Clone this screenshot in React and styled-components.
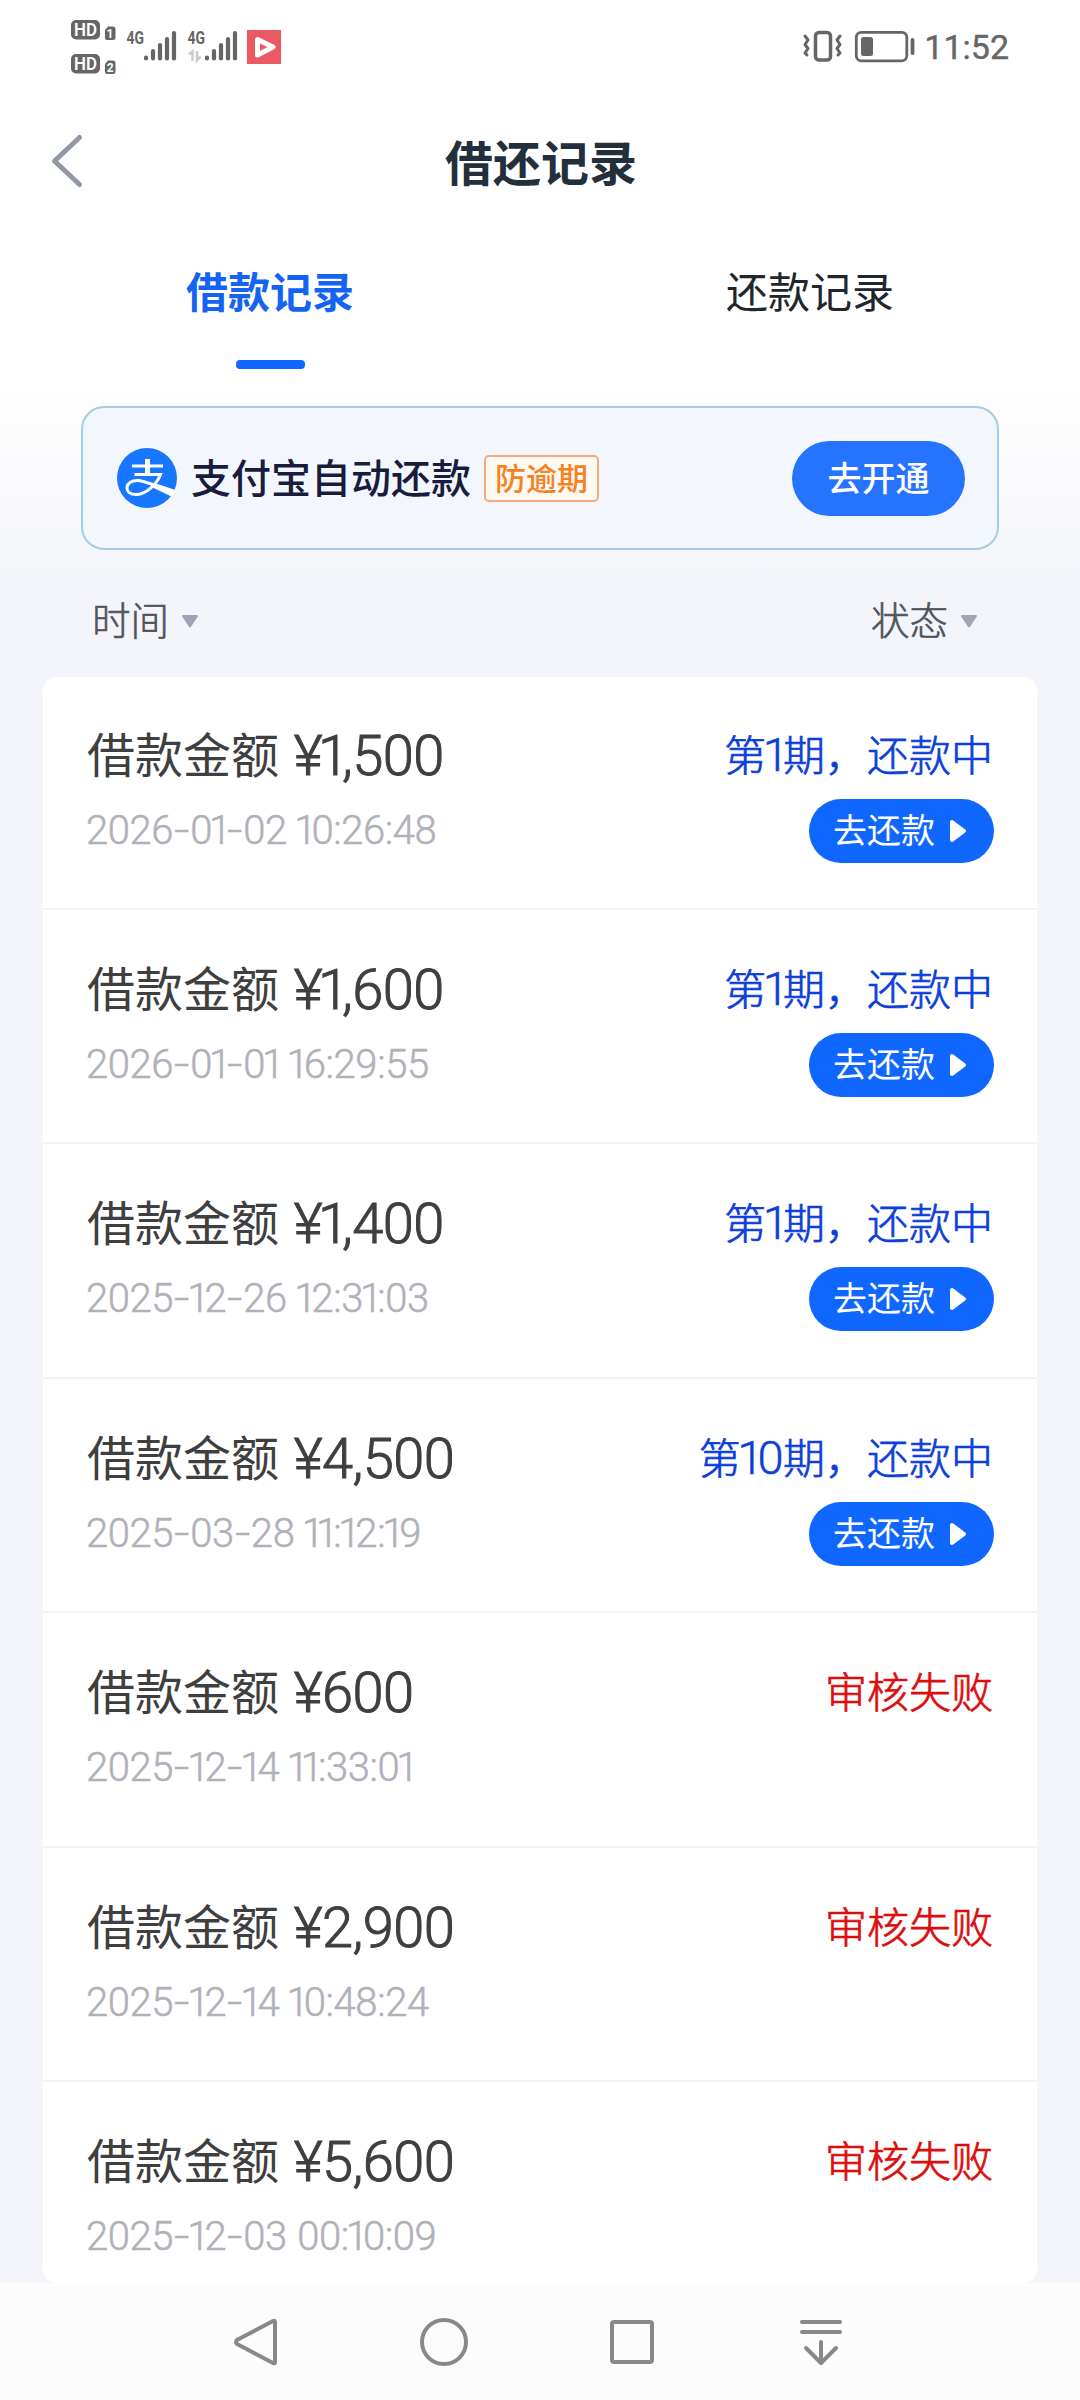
import React from 'react';
import styled, { createGlobalStyle, css } from 'styled-components';

const GlobalStyle = createGlobalStyle`
  * {
    box-sizing: border-box;
  }

  body {
    margin: 0;
    background: #f4f5fa;
    font-family: 'Noto Sans CJK SC', 'Noto Sans', sans-serif;
  }
`;

const Screen = styled.div`
  display: flex;
  flex-direction: column;
  width: 1080px;
  height: 2400px;
  overflow: hidden;
  background: linear-gradient(#ffffff 370px, #fcfcfd 430px, #f4f5fa 580px);
`;

const StatusBar = styled.div`
  display: flex;
  justify-content: space-between;
  height: 92px;
  padding: 0 71px;
`;

const StatusGroup = styled.div`
  display: flex;
  align-items: center;
`;

const Clock = styled.span`
  margin: 2px 0 0 8px;
  font: 400 34px/40px Roboto, sans-serif;
  color: #666;
  -webkit-text-stroke: 0.4px #666;
`;

const Header = styled.header`
  display: grid;
  grid-template-columns: 120px 1fr 120px;
  align-items: center;
  height: 138px;
`;

const BackButton = styled.button`
  display: flex;
  padding: 0 0 0 47px;
  border: 0;
  background: none;
`;

const Title = styled.h1`
  margin: 0;
  padding: 0 0 3px 2px;
  font-size: 48px;
  line-height: 70px;
  font-weight: 700;
  text-align: center;
  color: #232f3b;
`;

const Tabs = styled.nav`
  display: grid;
  grid-template-columns: 1fr 1fr;
  height: 176px;
`;

const Tab = styled.div`
  display: flex;
  flex-direction: column;
  align-items: center;
  padding-top: 29px;
  font-size: 42px;
  line-height: 62px;
  color: #20262c;

  ${(props) =>
    props.$active &&
    css`
      font-weight: 700;
      color: #1463f3;

      &::after {
        content: '';
        width: 69px;
        height: 9px;
        margin-top: 39px;
        border-radius: 4px;
        background: #1166ff;
      }
    `}
`;

const Banner = styled.section`
  display: flex;
  align-items: center;
  width: 918px;
  height: 144px;
  margin-left: 81px;
  padding: 0 32px 0 34px;
  border: 2px solid #a9cbe6;
  border-radius: 23px;
  background: #f3f7fd;
  box-shadow: inset 0 0 5px #e8f8ff;
`;

const BannerText = styled.span`
  margin-left: 14px;
  padding-bottom: 4px;
  font-size: 40px;
  font-weight: 500;
  line-height: 58px;
  color: #1a1c3d;
`;

const Tag = styled.span`
  width: 115px;
  height: 47px;
  margin-left: 13px;
  border: 2px solid #f4ab7a;
  border-radius: 5px;
  background: #fff9f4;
  font-size: 31px;
  font-weight: 500;
  line-height: 40px;
  text-align: center;
  color: #f7811c;
`;

const OpenButton = styled.button`
  width: 173px;
  height: 75px;
  margin-left: auto;
  padding: 0 0 3px;
  border: 0;
  border-radius: 38px;
  background: #2673ff;
  font: inherit;
  font-size: 34px;
  font-weight: 500;
  color: #fff;
`;

const Filters = styled.div`
  display: flex;
  justify-content: space-between;
  align-items: center;
  height: 127px;
  padding: 9px 102px 0 92px;
`;

const Filter = styled.div`
  display: flex;
  align-items: center;
  gap: 12px;
  font-size: 38.5px;
  font-weight: 300;
  line-height: 56px;
  color: #50545b;
  -webkit-text-stroke: 0.6px currentColor;

  svg {
    margin-top: 6px;
  }
`;

const List = styled.main`
  flex: 1;
  margin: 0 43px;
  overflow: hidden;
  border-radius: 14px;
  background: #fff;
`;

const Row = styled.article`
  display: flex;
  justify-content: space-between;
  height: 234.4px;
  padding: 43px 43px 0;
  border-bottom: 2px solid #f3f4f7;

  &:first-child {
    height: 233px;
    padding-top: 42px;
  }
`;

const Amount = styled.div`
  height: 70px;
  padding-left: 1px;
  font-size: 48px;
  font-weight: 400;
  line-height: 67px;
  white-space: pre;
  word-spacing: 4px;
  color: #3f3f3f;
`;

const Time = styled.div`
  height: 60px;
  margin-top: 12px;
  line-height: 60px;
  word-spacing: 1px;
  color: #b0b1b9;
`;

const Side = styled.div`
  display: flex;
  flex-direction: column;
  align-items: flex-end;
`;

const Status = styled.div`
  height: 70px;
  padding-right: 1px;
  font-size: 42px;
  font-weight: 300;
  line-height: 67px;
  color: ${(props) => (props.$failed ? '#dc0d0d' : '#0b3edb')};
  -webkit-text-stroke: 0.7px currentColor;
`;

const RepayButton = styled.button`
  display: flex;
  align-items: center;
  width: 185px;
  height: 64px;
  margin-top: 10px;
  padding: 0 0 4px 24px;
  gap: 14px;
  border: 0;
  border-radius: 32px;
  background: #0f67ff;
  font: inherit;
  font-size: 34px;
  line-height: 50px;
  color: #fff;

  svg {
    margin-top: 4px;
  }
`;

const Num = styled.span`
  font-family: Roboto, sans-serif;
  font-size: ${(props) => props.$size}px;
  font-weight: 300;
  letter-spacing: -0.01em;
  vertical-align: ${(props) => props.$drop || 0}px;
  -webkit-text-stroke: ${(props) => props.$stroke || 0.5}px currentColor;
`;

const One = styled.span`
  margin-left: -0.075em;
  letter-spacing: -0.125em;
`;

const Dash = styled.span`
  display: inline-block;
  margin: 0 0.08em 0 0.07em;
  transform: scaleX(1.35);
`;

const NavBar = styled.footer`
  display: flex;
  align-items: center;
  height: 117px;
  padding: 0 233px 0 231px;
  justify-content: space-between;
  background: #fcfcfc;
`;

// narrow "1" and wide "-" as in DIN numerals
const Digits = ({ value, size, stroke, drop }) => (
  <Num $size={size} $stroke={stroke} $drop={drop}>
    {value.split(/([1-])/).map((part, i) => {
      if (part === '1') return <One key={i}>1</One>;
      if (part === '-') return <Dash key={i}>-</Dash>;
      return part;
    })}
  </Num>
);

const Bars = ({ x }) => (
  <g stroke="#666" strokeWidth="4.2" strokeLinecap="round">
    <path d={`M${x} 57.5v1M${x + 7} 51v7.5M${x + 14} 45v13.5M${x + 21} 39v19.5M${x + 28} 33v25.5`} />
  </g>
);

const SignalIcons = () => (
  <svg width="212" height="92" viewBox="71 0 212 92" fontFamily="Roboto, sans-serif">
    <g fill="#666">
      <rect x="71" y="20" width="29" height="19.5" rx="5" />
      <rect x="71" y="54" width="29" height="19.5" rx="5" />
      <path d="M105 30l3-3.500h4.500q3 0 3 3v8q0 2.500-2.500 2.500H107q-2 0-2-2zM105 64l3-3.500h4.500q3 0 3 3v8q0 2.500-2.500 2.500H107q-2 0-2-2z" />
    </g>
    <g fill="#fff" fontWeight="700" textAnchor="middle">
      <text x="85.500" y="36" fontSize="17.500" fontWeight="600" textLength="23" lengthAdjust="spacingAndGlyphs">HD</text>
      <text x="85.500" y="70" fontSize="17.500" fontWeight="600" textLength="23" lengthAdjust="spacingAndGlyphs">HD</text>
      <text x="110" y="38" fontSize="12">1</text>
      <text x="110.300" y="72.300" fontSize="12">2</text>
    </g>
    <g fill="#666" fontSize="19" fontWeight="700">
      <text x="126.500" y="44.300" textLength="17.500" lengthAdjust="spacingAndGlyphs">4G</text>
      <text x="187.500" y="44.300" textLength="17.500" lengthAdjust="spacingAndGlyphs">4G</text>
    </g>
    <Bars x={146} />
    <Bars x={207} />
    <path d="M189 54.500l3.500-3V61M197 51v9.500l3.500-4" fill="none" stroke="#ccc" strokeWidth="2.500" />
    <rect x="247" y="30" width="34" height="34" fill="#e95a65" />
    <path d="M257.500 39.500v15.500l15.500-8z" fill="#e95a65" stroke="#fff" strokeWidth="5" strokeLinejoin="round" />
  </svg>
);

const BatteryIcons = () => (
  <svg width="114" height="92" viewBox="802 0 114 92" fill="none" stroke="#666" strokeLinecap="round" strokeLinejoin="round">
    <path d="M805 36l3 4-3 4.500 3 4-3 4.500 2 2M840 36l-3 4 3 4.500-3 4 3 4.500-2 2" strokeWidth="3" />
    <rect x="815.500" y="32.500" width="15" height="27.500" rx="3.500" strokeWidth="3.500" />
    <rect x="856.300" y="32.300" width="50.500" height="28.500" rx="5" strokeWidth="2.800" />
    <rect x="861" y="37" width="12" height="19" rx="2.500" fill="#666" stroke="none" />
    <path d="M912.500 40v13" strokeWidth="3.800" />
  </svg>
);

const BackIcon = () => (
  <svg width="38" height="56" viewBox="0 0 38 56">
    <path d="M32.500 4.500L7.500 28l25 23.500" fill="none" stroke="#9299a5" strokeWidth="5" strokeLinecap="round" strokeLinejoin="round" />
  </svg>
);

const AlipayIcon = () => (
  <svg width="60" height="60" viewBox="0 0 60 60">
    <circle cx="30" cy="30" r="30" fill="#1777ff" />
    <path
      d="M15 18h31M17.500 26.500h26C40 36 29 46.500 19 46.500c-6 0-9-3-9-6.500 0-4.500 4.500-7.500 10-7.500 9 0 21 7 37 12"
      fill="none"
      stroke="#fff"
      strokeWidth="3"
    />
    <path d="M28 11h5v16h-5z" fill="#fff" />
    <path d="M39 35.500l19.500 6.500-3 7-20-9.500z" fill="#fff" />
  </svg>
);

const CaretIcon = () => (
  <svg width="18" height="15" viewBox="0 0 18 15">
    <path d="M2 2h14L9 12.500z" fill="#a4a3b5" stroke="#a4a3b5" strokeWidth="2" strokeLinejoin="round" />
  </svg>
);

const PlayIcon = () => (
  <svg width="18" height="24" viewBox="0 0 18 24">
    <path d="M3 3v18L15 12z" fill="#fff" stroke="#fff" strokeWidth="4" strokeLinejoin="round" />
  </svg>
);

const NavIcon = ({ d, children }) => (
  <svg width="52" height="52" viewBox="0 0 52 52" fill="none" stroke="#888" strokeWidth="4" strokeLinecap="round" strokeLinejoin="round">
    {d && <path d={d} />}
    {children}
  </svg>
);

const records = [
  { amount: '1,500', time: '2026-01-02 10:26:48', period: '1' },
  { amount: '1,600', time: '2026-01-01 16:29:55', period: '1' },
  { amount: '1,400', time: '2025-12-26 12:31:03', period: '1' },
  { amount: '4,500', time: '2025-03-28 11:12:19', period: '10' },
  { amount: '600', time: '2025-12-14 11:33:01' },
  { amount: '2,900', time: '2025-12-14 10:48:24' },
  { amount: '5,600', time: '2025-12-03 00:10:09' },
];

const Record = ({ amount, time, period }) => (
  <Row>
    <div>
      <Amount>
        借款金额 <Digits value={`¥${amount}`} size={56} stroke={1} drop={-1.5} />
      </Amount>
      <Time>
        <Digits value={time} size={40} />
      </Time>
    </div>
    <Side>
      {period ? (
        <>
          <Status>
            第<Digits value={period} size={47} />期，还款中
          </Status>
          <RepayButton>
            去还款
            <PlayIcon />
          </RepayButton>
        </>
      ) : (
        <Status $failed>审核失败</Status>
      )}
    </Side>
  </Row>
);

const App = () => {
  return (
    <Screen>
      <GlobalStyle />
      <StatusBar>
        <StatusGroup>
          <SignalIcons />
        </StatusGroup>
        <StatusGroup>
          <BatteryIcons />
          <Clock>11:52</Clock>
        </StatusGroup>
      </StatusBar>
      <Header>
        <BackButton>
          <BackIcon />
        </BackButton>
        <Title>借还记录</Title>
      </Header>
      <Tabs>
        <Tab $active>借款记录</Tab>
        <Tab>还款记录</Tab>
      </Tabs>
      <Banner>
        <AlipayIcon />
        <BannerText>支付宝自动还款</BannerText>
        <Tag>防逾期</Tag>
        <OpenButton>去开通</OpenButton>
      </Banner>
      <Filters>
        <Filter>
          时间
          <CaretIcon />
        </Filter>
        <Filter>
          状态
          <CaretIcon />
        </Filter>
      </Filters>
      <List>
        {records.map((record) => (
          <Record key={record.time} {...record} />
        ))}
      </List>
      <NavBar>
        <NavIcon d="M44 6v40q0 2-2 1L6 28q-2-2 0-4L42 5q2-1 2 1z" />
        <NavIcon>
          <circle cx="25" cy="26" r="22" />
        </NavIcon>
        <NavIcon>
          <rect x="5" y="6" width="40" height="40" rx="2" />
        </NavIcon>
        <NavIcon d="M7 6h38M7 16h38M26 26v20M11 32l15 15 15-15" />
      </NavBar>
    </Screen>
  );
};

export default App;
